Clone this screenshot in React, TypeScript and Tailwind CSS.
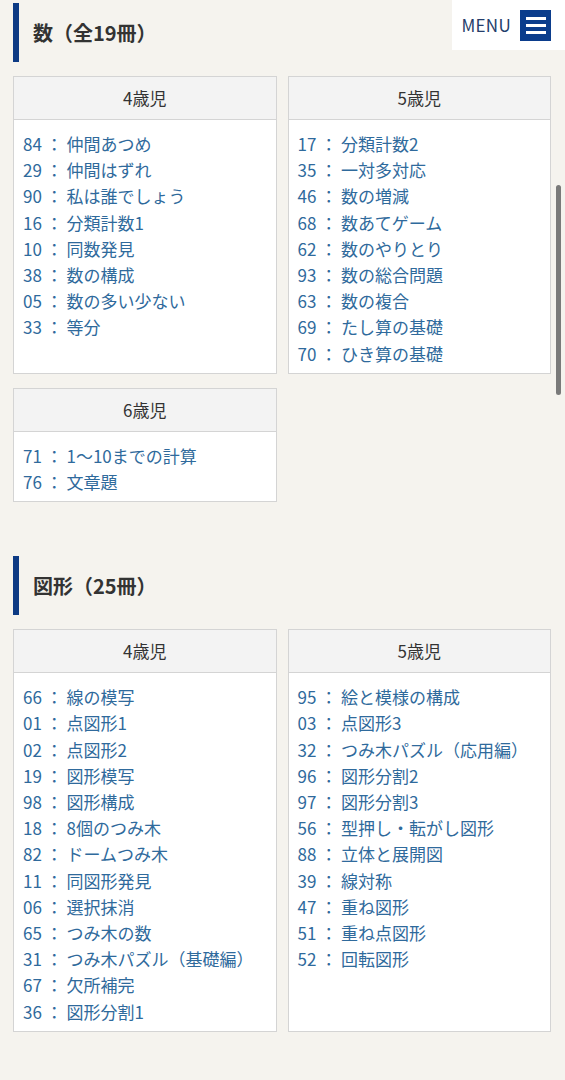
import React from 'react';

type Group = { age: string; items: [string, string][] };

const sections: { title: string; groups: Group[] }[] = [
  {
    title: '数（全19冊）',
    groups: [
      {
        age: '4歳児',
        items: [
          ['84', '仲間あつめ'],
          ['29', '仲間はずれ'],
          ['90', '私は誰でしょう'],
          ['16', '分類計数1'],
          ['10', '同数発見'],
          ['38', '数の構成'],
          ['05', '数の多い少ない'],
          ['33', '等分'],
        ],
      },
      {
        age: '5歳児',
        items: [
          ['17', '分類計数2'],
          ['35', '一対多対応'],
          ['46', '数の増減'],
          ['68', '数あてゲーム'],
          ['62', '数のやりとり'],
          ['93', '数の総合問題'],
          ['63', '数の複合'],
          ['69', 'たし算の基礎'],
          ['70', 'ひき算の基礎'],
        ],
      },
      {
        age: '6歳児',
        items: [
          ['71', '1〜10までの計算'],
          ['76', '文章題'],
        ],
      },
    ],
  },
  {
    title: '図形（25冊）',
    groups: [
      {
        age: '4歳児',
        items: [
          ['66', '線の模写'],
          ['01', '点図形1'],
          ['02', '点図形2'],
          ['19', '図形模写'],
          ['98', '図形構成'],
          ['18', '8個のつみ木'],
          ['82', 'ドームつみ木'],
          ['11', '同図形発見'],
          ['06', '選択抹消'],
          ['65', 'つみ木の数'],
          ['31', 'つみ木パズル（基礎編）'],
          ['67', '欠所補完'],
          ['36', '図形分割1'],
        ],
      },
      {
        age: '5歳児',
        items: [
          ['95', '絵と模様の構成'],
          ['03', '点図形3'],
          ['32', 'つみ木パズル（応用編）'],
          ['96', '図形分割2'],
          ['97', '図形分割3'],
          ['56', '型押し・転がし図形'],
          ['88', '立体と展開図'],
          ['39', '線対称'],
          ['47', '重ね図形'],
          ['51', '重ね点図形'],
          ['52', '回転図形'],
        ],
      },
    ],
  },
];

const AgeBox = ({ group }: { group: Group }) => (
  <div className="bg-white border border-[#d4d4d4]">
    <div className="h-[43px] flex items-center justify-center bg-[#f3f3f3] border-b border-[#d4d4d4] text-[17px] text-[#333]">
      {group.age}
    </div>
    <ul className="pt-[11px] pb-[6px] pl-[9px] pr-2">
      {group.items.map(([no, name]) => (
        <li key={no} className="text-[17px] leading-[26.2px] text-[#2f6a9c] whitespace-nowrap">
          {no} ： {name}
        </li>
      ))}
    </ul>
  </div>
);

export default function App() {
  return (
    <div
      className="relative min-h-[1080px] bg-[#f5f3ee] pl-[13px] pr-[14px] pt-[3px] pb-10"
      style={{ fontFamily: '"Noto Sans CJK JP", "Noto Sans", sans-serif' }}
    >
      {sections.map((s, i) => (
        <section key={s.title} className={i > 0 ? 'mt-[54px]' : ''}>
          <h2 className="h-[59px] flex items-center border-l-[6px] border-[#0d3a84] pl-[14px] text-[20px] font-bold text-[#333]">
            {s.title}
          </h2>
          <div className="mt-[14px] grid grid-cols-2 gap-x-[11px] gap-y-[14px]">
            {s.groups.map((g) => (
              <AgeBox key={g.age} group={g} />
            ))}
          </div>
        </section>
      ))}

      {/* fixed menu button */}
      <div className="absolute top-0 right-0 w-[113px] h-[50px] bg-white flex items-center justify-end pr-[14px] gap-[9px]">
        <span className="text-[17px] text-[#243d6b] tracking-[0.3px]">MENU</span>
        <span className="w-[31px] h-[31px] bg-[#0b3d8c] flex flex-col items-center justify-center gap-[4px]">
          <span className="block w-[20px] h-[3px] bg-white" />
          <span className="block w-[20px] h-[3px] bg-white" />
          <span className="block w-[20px] h-[3px] bg-white" />
        </span>
      </div>

      {/* scroll indicator */}
      <div className="absolute top-[185px] right-[4px] w-[5px] h-[210px] rounded-full bg-[#7a7a7a]" />
    </div>
  );
}
